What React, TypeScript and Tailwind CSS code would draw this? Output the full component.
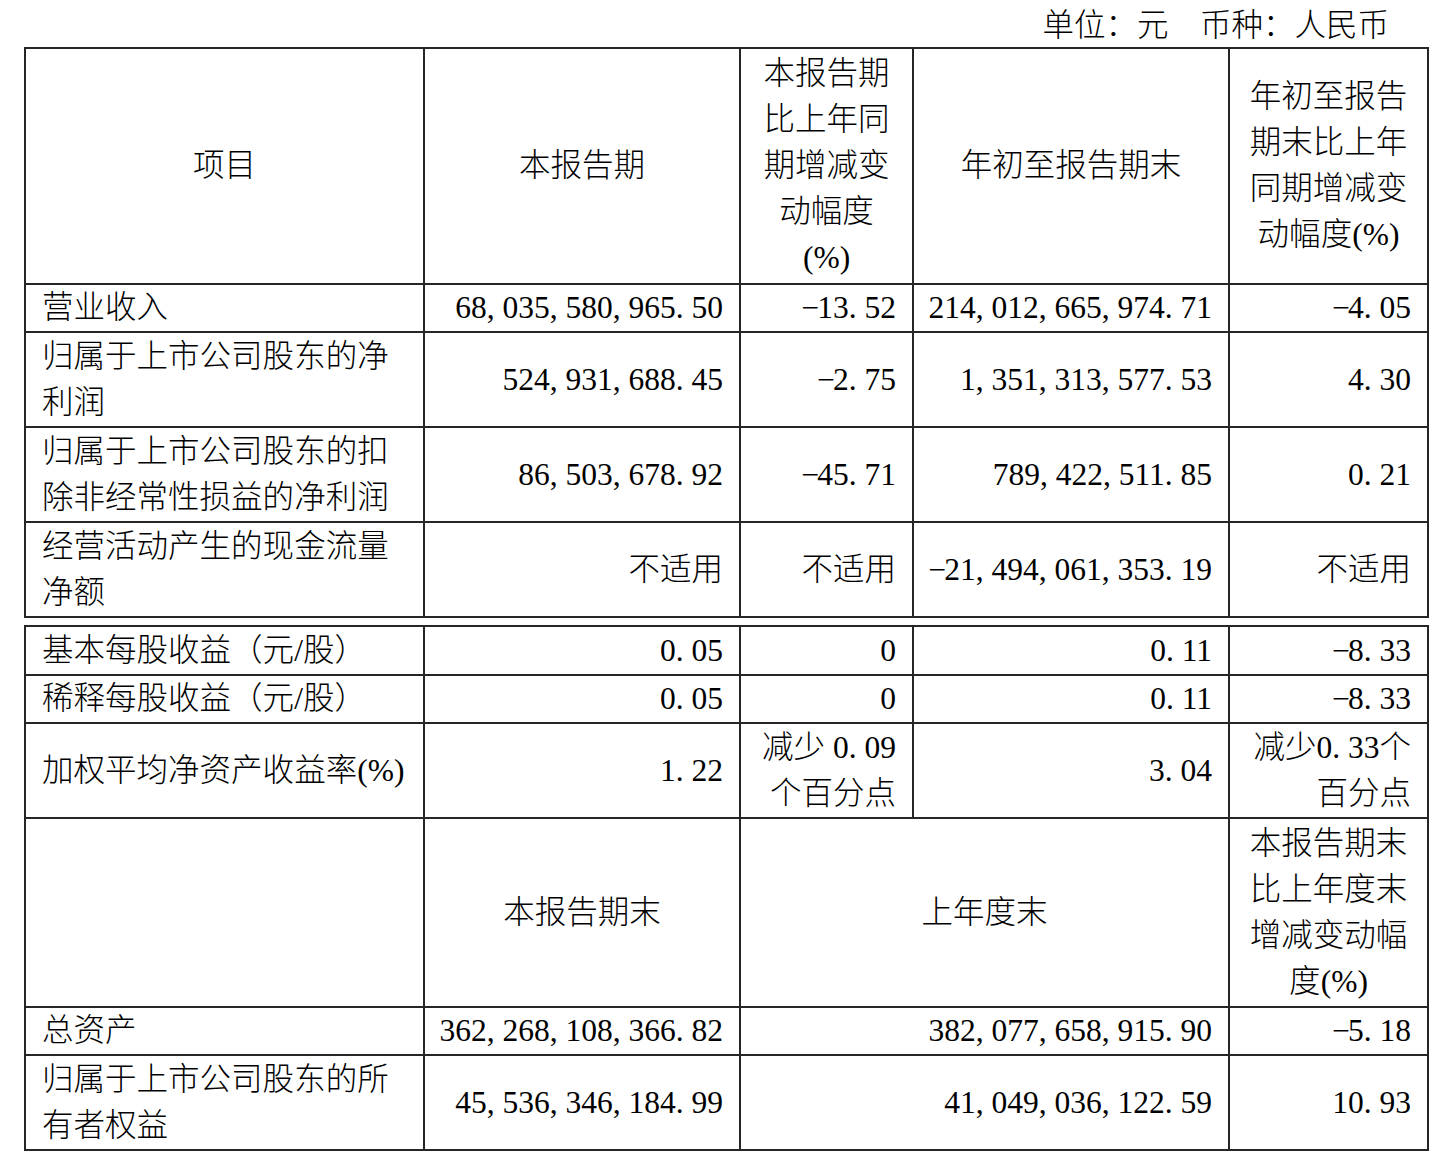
import React from 'react'

const cell = 'border-2 border-[#262626] align-middle p-0'
const left = `${cell} text-left pl-[16px]`
const right = `${cell} text-right pr-[16px]`
const center = `${cell} text-center`

// ASCII punctuation gets a half-width cell, like the Song face in the source PDF
function T({ s }: { s: string }) {
  const lines = s.split('\n')
  return (
    <>
      {lines.map((line, li) => (
        <React.Fragment key={li}>
          {li > 0 && <br />}
          {Array.from(line).map((c, i) =>
            c === ',' || c === '.' ? (
              <span key={i} className="inline-block w-[0.5em] text-left">{c}</span>
            ) : c === '-' ? (
              <span key={i} className="inline-block w-[0.5em] text-center">−</span>
            ) : (
              c
            ),
          )}
        </React.Fragment>
      ))}
    </>
  )
}

const Cols = () => (
  <colgroup>
    <col className="w-[399px]" />
    <col className="w-[316px]" />
    <col className="w-[173px]" />
    <col className="w-[316px]" />
    <col className="w-[199px]" />
  </colgroup>
)

const top = [
  { h: 'h-[48px]', item: '营业收入', a: '68,035,580,965.50', b: '-13.52', c: '214,012,665,974.71', d: '-4.05' },
  { h: 'h-[95px]', item: '归属于上市公司股东的净\n利润', a: '524,931,688.45', b: '-2.75', c: '1,351,313,577.53', d: '4.30' },
  { h: 'h-[95px]', item: '归属于上市公司股东的扣\n除非经常性损益的净利润', a: '86,503,678.92', b: '-45.71', c: '789,422,511.85', d: '0.21' },
  { h: 'h-[95px]', item: '经营活动产生的现金流量\n净额', a: '不适用', b: '不适用', c: '-21,494,061,353.19', d: '不适用' },
]

const perShare = [
  { h: 'h-[49px]', item: '基本每股收益（元/股）', a: '0.05', b: '0', c: '0.11', d: '-8.33' },
  { h: 'h-[48px]', item: '稀释每股收益（元/股）', a: '0.05', b: '0', c: '0.11', d: '-8.33' },
  { h: 'h-[95px]', item: '加权平均净资产收益率(%)', a: '1.22', b: '减少 0.09\n个百分点', c: '3.04', d: '减少0.33个\n百分点' },
]

const balance = [
  { h: 'h-[48px]', item: '总资产', a: '362,268,108,366.82', c: '382,077,658,915.90', d: '-5.18' },
  { h: 'h-[95px]', item: '归属于上市公司股东的所\n有者权益', a: '45,536,346,184.99', c: '41,049,036,122.59', d: '10.93' },
]

export default function App() {
  return (
    <div className="min-h-[1159px] w-[1437px] bg-white text-black font-light text-[31.5px] leading-[46px] font-['Liberation_Serif','Noto_Sans_CJK_SC',serif]">
      <div className="h-[47px] pt-[3px] pr-[48px] text-right">单位：元　币种：人民币</div>

      <table className="ml-[24px] table-fixed border-collapse w-[1405px]">
        <Cols />
        <tbody>
          <tr className="h-[236px]">
            <td className={center}>项目</td>
            <td className={center}>本报告期</td>
            <td className={center}>
              <T s={'本报告期\n比上年同\n期增减变\n动幅度\n(%)'} />
            </td>
            <td className={center}>年初至报告期末</td>
            <td className={center}>
              <T s={'年初至报告\n期末比上年\n同期增减变\n动幅度(%)'} />
            </td>
          </tr>
          {top.map((r) => (
            <tr key={r.item} className={r.h}>
              <td className={left}><T s={r.item} /></td>
              <td className={right}><T s={r.a} /></td>
              <td className={right}><T s={r.b} /></td>
              <td className={right}><T s={r.c} /></td>
              <td className={right}><T s={r.d} /></td>
            </tr>
          ))}
        </tbody>
      </table>

      <table className="ml-[24px] mt-[7px] table-fixed border-collapse w-[1405px]">
        <Cols />
        <tbody>
          {perShare.map((r) => (
            <tr key={r.item} className={r.h}>
              <td className={left}><T s={r.item} /></td>
              <td className={right}><T s={r.a} /></td>
              <td className={right}><T s={r.b} /></td>
              <td className={right}><T s={r.c} /></td>
              <td className={right}><T s={r.d} /></td>
            </tr>
          ))}
          <tr className="h-[189px]">
            <td className={cell}></td>
            <td className={center}>本报告期末</td>
            <td className={center} colSpan={2}>上年度末</td>
            <td className={center}>
              <T s={'本报告期末\n比上年度末\n增减变动幅\n度(%)'} />
            </td>
          </tr>
          {balance.map((r) => (
            <tr key={r.item} className={r.h}>
              <td className={left}><T s={r.item} /></td>
              <td className={right}><T s={r.a} /></td>
              <td className={right} colSpan={2}><T s={r.c} /></td>
              <td className={right}><T s={r.d} /></td>
            </tr>
          ))}
        </tbody>
      </table>
    </div>
  )
}
